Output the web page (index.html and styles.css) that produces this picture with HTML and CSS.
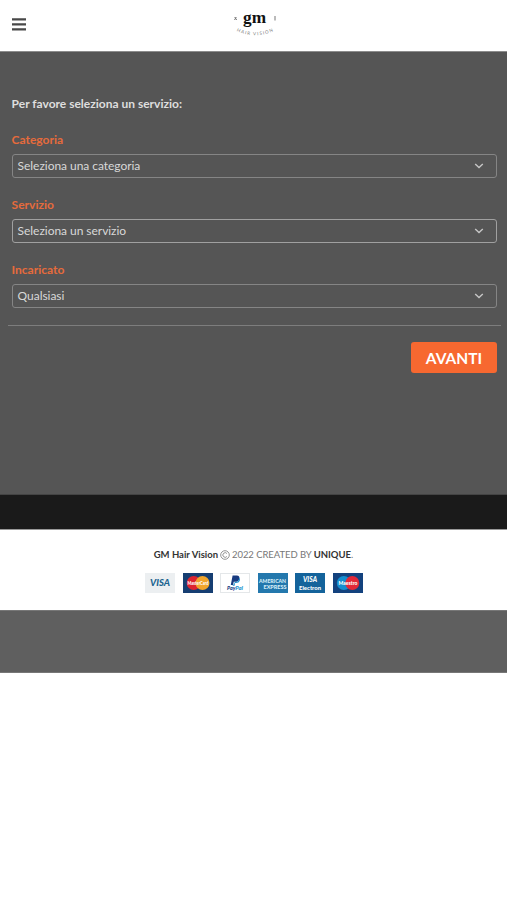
FILE: index.html
```html
<!DOCTYPE html>
<html lang="it">
<head>
<meta charset="utf-8">
<title>GM Hair Vision</title>
<link rel="stylesheet" href="styles.css">
</head>
<body>
<header class="header">
  <svg class="menu" viewBox="0 0 14 13"><path d="M0 1.4h14M0 6.4h14M0 11.4h14" stroke="#484848" stroke-width="2.1"/></svg>
  <svg class="logo" viewBox="0 0 46 30">
    <text class="logo-gm" x="10" y="13.5" textLength="23" lengthAdjust="spacingAndGlyphs">gm</text>
    <path d="M1.5 11l1.8-3M1.7 8l2 3M42 7v4.5" stroke="#777" stroke-width="1" fill="none"/>
    <path id="arc" d="M3.5 22Q22 31 42 21.5" fill="none"/>
    <text class="logo-arc"><textPath href="#arc" textLength="38">HAIR VISION</textPath></text>
  </svg>
</header>
<main class="booking">
  <p class="intro">Per favore seleziona un servizio:</p>
  <div class="field"><div class="label">Categoria</div>
    <div class="select"><span>Seleziona una categoria</span><svg class="chevron" viewBox="0 0 10 6"><path d="M1.2 1L5 4.6 8.8 1"/></svg></div></div>
  <div class="field"><div class="label">Servizio</div>
    <div class="select bright"><span>Seleziona un servizio</span><svg class="chevron" viewBox="0 0 10 6"><path d="M1.2 1L5 4.6 8.8 1"/></svg></div></div>
  <div class="field"><div class="label">Incaricato</div>
    <div class="select"><span>Qualsiasi</span><svg class="chevron" viewBox="0 0 10 6"><path d="M1.2 1L5 4.6 8.8 1"/></svg></div></div>
  <div class="actions"><button class="next">AVANTI</button></div>
</main>
<div class="band"></div>
<footer class="footer">
  <p class="copy"><b>GM Hair Vision</b><svg class="cr" viewBox="0 0 10 10"><circle cx="5" cy="5" r="4.3"/><path d="M6.9 3.5A2.3 2.3 0 1 0 6.9 6.5"/></svg><span class="made">2022 CREATED BY</span><span><b>UNIQUE</b>.</span></p>
  <div class="cards">
    <svg viewBox="0 0 30 20"><rect width="30" height="20" fill="#eceff1"/><text x="5" y="13.3" textLength="20" lengthAdjust="spacingAndGlyphs" font-size="9.5" font-style="italic" fill="#20648f">VISA</text></svg>
    <svg viewBox="0 0 30 20"><rect width="30" height="20" fill="#163e72"/><circle cx="10.7" cy="10" r="7" fill="#dc2430"/><circle cx="19.5" cy="10" r="7" fill="#f1a52c"/><text x="4.5" y="12" textLength="21" lengthAdjust="spacingAndGlyphs" font-size="5" fill="#fff">MasterCard</text></svg>
    <svg viewBox="0 0 30 20"><rect x=".5" y=".5" width="29" height="19" fill="#fff" stroke="#e4e7e9"/><path d="M12.6 2.5h4.2q3.3.2 2.5 3.4-.8 2.8-4.2 2.8h-1.4l-.6 3.3h-2.3z" fill="#183b80"/><path d="M19.2 4.8q1.3 1 .6 2.9-.8 2.2-3.8 2.2h-.9l-.5 2.9h-2l.3-1.2h1.1l.7-2.7h1.5q2.8-.5 3-4.1z" fill="#2695d0"/><text x="7" y="17" textLength="8.3" lengthAdjust="spacingAndGlyphs" font-size="5.3" font-style="italic" fill="#183b80">Pay</text><text x="15.3" y="17" textLength="7.7" lengthAdjust="spacingAndGlyphs" font-size="5.3" font-style="italic" fill="#2695d0">Pal</text></svg>
    <svg viewBox="0 0 30 20"><rect width="30" height="20" fill="#2378ad"/><text x="1" y="9.5" textLength="27" lengthAdjust="spacingAndGlyphs" font-size="5.8" fill="#d5edf7">AMERICAN</text><text x="5.5" y="15.7" textLength="23" lengthAdjust="spacingAndGlyphs" font-size="5.8" fill="#d5edf7">EXPRESS</text></svg>
    <svg viewBox="0 0 30 20"><rect width="30" height="20" fill="#14639b"/><text x="8" y="9" textLength="14" lengthAdjust="spacingAndGlyphs" font-size="7" font-style="italic" fill="#fff">VISA</text><text x="4" y="17" textLength="22" lengthAdjust="spacingAndGlyphs" font-size="6" fill="#fff">Electron</text></svg>
    <svg viewBox="0 0 30 20"><rect width="30" height="20" fill="#13427e"/><circle cx="10.8" cy="10" r="7" fill="#158ed0"/><circle cx="19.3" cy="10" r="7" fill="#e22838"/><text x="5.5" y="12.2" textLength="19" lengthAdjust="spacingAndGlyphs" font-size="6" fill="#fff">Maestro</text></svg>
  </div>
</footer>
<div class="tail"></div>
</body>
</html>
```
FILE: styles.css
```css
* { box-sizing: border-box; }
body { margin: 0; background: #fff; font-family: Lato, sans-serif; }
p { margin: 0; }
svg { display: block; }
.header { height: 51px; display: grid; grid-template-columns: 1fr 46px 1fr; align-items: start; padding: 0 10px 0 12px; }
.menu { width: 14px; height: 13px; margin-top: 18px; }
.logo { width: 46px; height: 30px; margin: 9px 0 0 1px; overflow: visible; }
.logo-gm { font: 700 16px "Liberation Serif", serif; fill: #111; }
.logo-arc { font: 4.5px Lato, sans-serif; fill: #777; }
.booking { height: 444px; background: #555; border-top: 1px solid #8c8c8c; border-bottom: 1px solid #444; padding: 43px 10px 0 11.6px; }
.intro { font-size: 12px; line-height: 18px; font-weight: 700; color: #dedede; margin-bottom: 18px; }
.field { height: 65px; }
.label { font-size: 12px; line-height: 18px; font-weight: 700; color: #e66b3c; margin-bottom: 5px; }
.select { height: 24px; border: 1px solid #858585; border-radius: 3px; display: flex; align-items: center; justify-content: space-between; padding: 0 12px 0 5px; font-size: 12px; letter-spacing: -.04px; line-height: 18px; color: #d8d8d8; }
.bright { border-color: #a0a0a0; }
.chevron { width: 10px; height: 6px; fill: none; stroke: #c6c6c6; stroke-width: 1.4; }
.actions { margin: -1px -4px 0; border-top: 1px solid #7d7d7d; padding: 16px 4px 0; display: flex; justify-content: flex-end; }
.next { width: 86px; height: 31px; border: 0; border-radius: 3px; background: #f76830; color: #fff; font: 700 15.5px/30px Lato, sans-serif; padding: 0; }
.band { height: 34px; background: #1a1a1a; }
.footer { height: 81px; border-top: 1px solid #999; padding-top: 18px; }
.copy { display: flex; justify-content: center; align-items: center; gap: 2px; white-space: nowrap; font-size: 9.5px; line-height: 14px; color: #777; }
.copy b { color: #333; }
.made { letter-spacing: -.07px; }
.cr { width: 10px; height: 10px; fill: none; stroke: #777; stroke-width: .8; }
.cards { display: flex; justify-content: center; gap: 7.5px; margin: 11px 0 0 1px; }
.cards svg { width: 30px; height: 20px; font-family: Lato, sans-serif; font-weight: 900; }
.tail { height: 63px; background: #5f5f5f; border-top: 1px solid #777; border-bottom: 1px solid #777; }
```
